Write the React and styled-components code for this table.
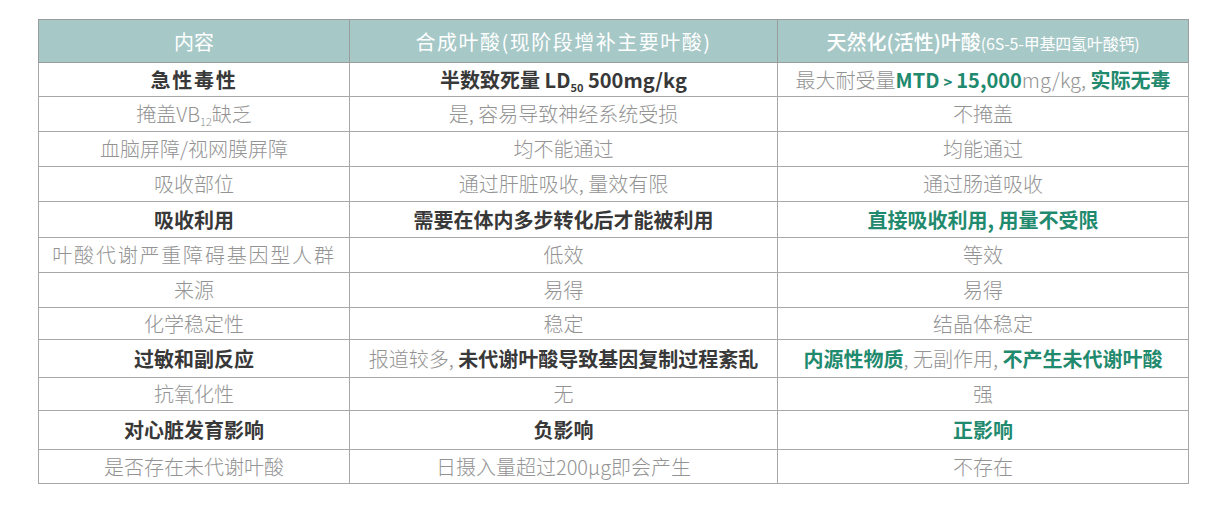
import React from "react";
import styled, { createGlobalStyle } from "styled-components";

const Global = createGlobalStyle`
  html, body { margin: 0; padding: 0; background: #ffffff; }
  body { font-family: "Noto Sans CJK SC", "Noto Sans", sans-serif; }
`;

const Page = styled.div`
  padding: 19px 0 0 38px;
`;

const Table = styled.table`
  border-collapse: collapse;
  table-layout: fixed;
  width: 1150px;
  border: 1px solid #9c9c9c;
`;

const HeadCell = styled.th`
  height: 42px;
  padding: 0;
  background: #a6c8c7;
  color: #ffffff;
  font-weight: ${(p) => p.$w || 400};
  font-size: 20px;
  letter-spacing: ${(p) => p.$ls || 0}px;
  text-align: center;
  border: 1px solid #9c9c9c;
  white-space: nowrap;
`;

const Small = styled.span`
  font-size: 16px;
  font-weight: 400;
  letter-spacing: -0.2px;
`;

const Row = styled.tr`
  height: ${(p) => p.$h}px;
`;

const Cell = styled.td`
  padding: 0;
  text-align: center;
  font-size: 20px;
  line-height: 1;
  white-space: nowrap;
  border: 1px solid #a8a8a8;
  letter-spacing: ${(p) => p.$ls || 0}px;
  color: ${(p) => (p.$tone === "dark" ? "#383838" : p.$tone === "green" ? "#1f8a6e" : "#939393")};
  font-weight: ${(p) => (p.$tone === "gray" ? 300 : 700)};
`;

const Gray = styled.span`
  color: #939393;
  font-weight: 300;
`;

const Dark = styled.span`
  color: #383838;
  font-weight: 700;
`;

const Green = styled.span`
  color: #1f8a6e;
  font-weight: 700;
`;

const Sub = styled.sub`
  font-size: 11px;
  vertical-align: -4px;
  line-height: 0;
`;

const Gt = styled.span`
  font-size: 15px;
  margin: 0 4px;
`;

const rows = [
  {
    h: 34,
    a: { t: "dark", ls: 1.8, c: "急性毒性" },
    b: { t: "dark", c: <>半数致死量 LD<Sub>50</Sub> 500mg/kg</> },
    c: {
      t: "gray",
      c: (
        <>
          最大耐受量<Green>MTD<Gt>&gt;</Gt>15,000</Green>mg/kg, <Green>实际无毒</Green>
        </>
      ),
    },
  },
  {
    h: 35,
    a: { t: "gray", c: <>掩盖VB<Sub>12</Sub>缺乏</> },
    b: { t: "gray", c: "是, 容易导致神经系统受损" },
    c: { t: "gray", c: "不掩盖" },
  },
  {
    h: 35,
    a: { t: "gray", c: "血脑屏障/视网膜屏障" },
    b: { t: "gray", c: "均不能通过" },
    c: { t: "gray", c: "均能通过" },
  },
  {
    h: 35,
    a: { t: "gray", c: "吸收部位" },
    b: { t: "gray", c: "通过肝脏吸收, 量效有限" },
    c: { t: "gray", c: "通过肠道吸收" },
  },
  {
    h: 36,
    a: { t: "dark", c: "吸收利用" },
    b: { t: "dark", c: "需要在体内多步转化后才能被利用" },
    c: { t: "green", c: "直接吸收利用, 用量不受限" },
  },
  {
    h: 35,
    a: { t: "gray", ls: 1.8, c: "叶酸代谢严重障碍基因型人群" },
    b: { t: "gray", c: "低效" },
    c: { t: "gray", c: "等效" },
  },
  {
    h: 35,
    a: { t: "gray", c: "来源" },
    b: { t: "gray", c: "易得" },
    c: { t: "gray", c: "易得" },
  },
  {
    h: 32,
    a: { t: "gray", c: "化学稳定性" },
    b: { t: "gray", c: "稳定" },
    c: { t: "gray", c: "结晶体稳定" },
  },
  {
    h: 38,
    a: { t: "dark", c: "过敏和副反应" },
    b: { t: "gray", c: <>报道较多, <Dark>未代谢叶酸导致基因复制过程紊乱</Dark></> },
    c: { t: "green", c: <>内源性物质<Gray>, 无副作用, </Gray>不产生未代谢叶酸</> },
  },
  {
    h: 33,
    a: { t: "gray", c: "抗氧化性" },
    b: { t: "gray", c: "无" },
    c: { t: "gray", c: "强" },
  },
  {
    h: 39,
    a: { t: "dark", c: "对心脏发育影响" },
    b: { t: "dark", c: "负影响" },
    c: { t: "green", c: "正影响" },
  },
  {
    h: 34,
    a: { t: "gray", c: "是否存在未代谢叶酸" },
    b: { t: "gray", c: "日摄入量超过200μg即会产生" },
    c: { t: "gray", c: "不存在" },
  },
];

export default function App() {
  return (
    <Page>
      <Global />
      <Table>
        <colgroup>
          <col style={{ width: 311 }} />
          <col style={{ width: 428 }} />
          <col style={{ width: 411 }} />
        </colgroup>
        <thead>
          <tr>
            <HeadCell>内容</HeadCell>
            <HeadCell $ls={1.5}>合成叶酸(现阶段增补主要叶酸)</HeadCell>
            <HeadCell $w={500}>
              天然化(活性)叶酸<Small>(6S-5-甲基四氢叶酸钙)</Small>
            </HeadCell>
          </tr>
        </thead>
        <tbody>
          {rows.map((r, i) => (
            <Row key={i} $h={r.h}>
              <Cell $tone={r.a.t} $ls={r.a.ls}>{r.a.c}</Cell>
              <Cell $tone={r.b.t} $ls={r.b.ls}>{r.b.c}</Cell>
              <Cell $tone={r.c.t} $ls={r.c.ls}>{r.c.c}</Cell>
            </Row>
          ))}
        </tbody>
      </Table>
    </Page>
  );
}
